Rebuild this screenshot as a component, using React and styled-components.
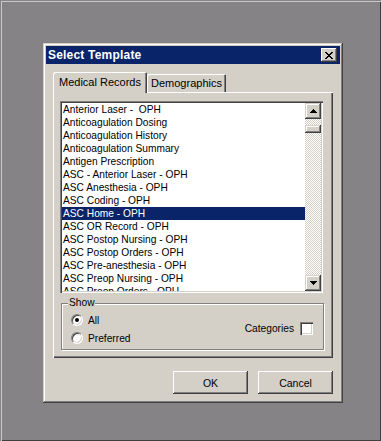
import React, { useState } from "react";
import styled, { createGlobalStyle } from "styled-components";

const GlobalStyle = createGlobalStyle`
  html, body {
    margin: 0;
    padding: 0;
  }
  body {
    font-family: "Liberation Sans", Arial, sans-serif;
    font-size: 11px;
    color: #000;
  }
`;

const templates = [
  "Anterior Laser -  OPH",
  "Anticoagulation Dosing",
  "Anticoagulation History",
  "Anticoagulation Summary",
  "Antigen Prescription",
  "ASC - Anterior Laser - OPH",
  "ASC Anesthesia - OPH",
  "ASC Coding - OPH",
  "ASC Home - OPH",
  "ASC OR Record - OPH",
  "ASC Postop Nursing - OPH",
  "ASC Postop Orders - OPH",
  "ASC Pre-anesthesia - OPH",
  "ASC Preop Nursing - OPH",
  "ASC Preop Orders - OPH",
];

function App() {
  const [selected, setSelected] = useState(8);
  const [show, setShow] = useState("all");
  const [categories, setCategories] = useState(false);

  return (
    <>
      <GlobalStyle />
      <Desktop>
        <Window>
          <TitleBar>
            <Title>Select Template</Title>
            <CloseButton aria-label="Close">
              <svg width="8" height="7" viewBox="0 0 8 7">
                <path
                  d="M0 0h2v1h1v1h2V1h1V0h2v1H7v1H6v1H5v1h1v1h1v1h1v1H6V6H5V5H3v1H2v1H0V6h1V5h1V4h1V3H2V2H1V1H0z"
                  fill="#000"
                />
              </svg>
            </CloseButton>
          </TitleBar>

          <Body>
            <TabStrip>
              <Tab active>Medical Records</Tab>
              <Tab>Demographics</Tab>
            </TabStrip>

            <TabPanel>
              <ListBox>
                <Items>
                  {templates.map((t, i) => (
                    <Item
                      key={t}
                      selected={i === selected}
                      onClick={() => setSelected(i)}
                    >
                      {t}
                    </Item>
                  ))}
                </Items>
                <ScrollBar>
                  <ArrowButton>
                    <svg width="7" height="4" viewBox="0 0 7 4">
                      <path d="M3 0h1v1h1v1h1v1h1v1H0V3h1V2h1V1h1z" fill="#000" />
                    </svg>
                  </ArrowButton>
                  <Track>
                    <Thumb />
                  </Track>
                  <ArrowButton>
                    <svg width="7" height="4" viewBox="0 0 7 4">
                      <path d="M0 0h7v1H6v1H5v1H4v1H3V3H2V2H1V1H0z" fill="#000" />
                    </svg>
                  </ArrowButton>
                </ScrollBar>
              </ListBox>

              <GroupBox>
                <Legend>Show</Legend>
                <Options>
                  <RadioRow onClick={() => setShow("all")}>
                    <Radio checked={show === "all"} />
                    All
                  </RadioRow>
                  <RadioRow onClick={() => setShow("preferred")}>
                    <Radio checked={show === "preferred"} />
                    Preferred
                  </RadioRow>
                </Options>
                <CheckRow onClick={() => setCategories(!categories)}>
                  Categories
                  <CheckBox>{categories ? "✓" : ""}</CheckBox>
                </CheckRow>
              </GroupBox>
            </TabPanel>

            <ButtonRow>
              <Button>OK</Button>
              <Button>Cancel</Button>
            </ButtonRow>
          </Body>
        </Window>
      </Desktop>
    </>
  );
}

export default App;

const Desktop = styled.div`
  box-sizing: border-box;
  width: 381px;
  height: 441px;
  padding: 43px 0 0 43px;
  background: #858385;
  box-shadow: inset 1px 1px #858385, inset 2px 2px #c8c6c8,
    inset -1px -1px #404040;
`;

const Window = styled.div`
  box-sizing: border-box;
  width: 300px;
  height: 360px;
  padding: 3px;
  background: #d4d0c8;
  box-shadow: inset -1px -1px #404040, inset 1px 1px #d4d0c8,
    inset -2px -2px #808080, inset 2px 2px #ffffff;
`;

const TitleBar = styled.div`
  display: flex;
  align-items: center;
  justify-content: space-between;
  height: 18px;
  padding: 0 3px 0 2px;
  background: #0a246a;
`;

const Title = styled.span`
  color: #fff;
  font-weight: bold;
  font-size: 12px;
  letter-spacing: 0.2px;
`;

const CloseButton = styled.button`
  display: flex;
  align-items: center;
  justify-content: center;
  width: 16px;
  height: 14px;
  padding: 0;
  border: 0;
  background: #d4d0c8;
  box-shadow: inset -1px -1px #404040, inset 1px 1px #ffffff,
    inset -2px -2px #808080;
`;

const Body = styled.div`
  padding: 8px 7px 0 7px;
`;

const TabStrip = styled.div`
  display: flex;
  align-items: flex-end;
  height: 20px;
  position: relative;
  z-index: 1;
`;

const Tab = styled.div`
  box-sizing: border-box;
  display: flex;
  align-items: center;
  justify-content: center;
  height: ${(p) => (p.active ? "21px" : "18px")};
  margin-bottom: ${(p) => (p.active ? "-1px" : "0")};
  width: ${(p) => (p.active ? "94px" : "79px")};
  padding-bottom: ${(p) => (p.active ? "2px" : "0")};
  background: #d4d0c8;
  border-radius: 2px 2px 0 0;
  font-size: 11px;
  box-shadow: inset 1px 1px #ffffff, inset -1px 0 #404040,
    inset -2px 0 #808080;
`;

const TabPanel = styled.div`
  box-sizing: border-box;
  width: 280px;
  height: 266px;
  padding: 9px 10px 0 7px;
  background: #d4d0c8;
  box-shadow: inset 1px 1px #ffffff, inset -1px -1px #404040,
    inset -2px -2px #808080;
`;

const ListBox = styled.div`
  box-sizing: border-box;
  display: flex;
  width: 263px;
  height: 192px;
  padding: 2px;
  background: #fff;
  box-shadow: inset 1px 1px #808080, inset 2px 2px #404040,
    inset -1px -1px #ffffff, inset -2px -2px #d4d0c8;
`;

const Items = styled.div`
  flex: 1;
  overflow: hidden;
`;

const Item = styled.div`
  height: 13px;
  line-height: 13px;
  padding-left: 1px;
  font-size: 10.2px;
  white-space: pre;
  cursor: default;
  color: ${(p) => (p.selected ? "#fff" : "#000")};
  background: ${(p) => (p.selected ? "#0a246a" : "transparent")};
`;

const ScrollBar = styled.div`
  display: flex;
  flex-direction: column;
  width: 16px;
`;

const ArrowButton = styled.div`
  display: flex;
  align-items: center;
  justify-content: center;
  flex: 0 0 16px;
  height: 16px;
  background: #d4d0c8;
  box-shadow: inset -1px -1px #404040, inset 1px 1px #d4d0c8,
    inset -2px -2px #808080, inset 2px 2px #ffffff;
`;

const Track = styled.div`
  flex: 1;
  padding-top: 6px;
  background: repeating-conic-gradient(#ffffff 0 25%, #d4d0c8 0 50%) 0 0 / 2px
    2px;
`;

const Thumb = styled.div`
  height: 8px;
  background: #d4d0c8;
  box-shadow: inset -1px -1px #404040, inset 1px 1px #d4d0c8,
    inset -2px -2px #808080, inset 2px 2px #ffffff;
`;

const GroupBox = styled.div`
  position: relative;
  box-sizing: border-box;
  display: flex;
  align-items: center;
  justify-content: space-between;
  width: 263px;
  height: 47px;
  margin: 10px 0 0 1px;
  padding: 5px 10px 0 9px;
  border: 1px solid #808080;
  box-shadow: inset 1px 1px #ffffff, 1px 1px #ffffff;
  font-size: 10.2px;
`;

const Legend = styled.span`
  position: absolute;
  top: -7px;
  left: 6px;
  padding: 0 1px;
  background: #d4d0c8;
  font-size: 10.2px;
  line-height: 12px;
`;

const Options = styled.div`
  display: flex;
  flex-direction: column;
  gap: 6px;
`;

const RadioRow = styled.label`
  display: flex;
  align-items: center;
  gap: 5px;
  height: 12px;
`;

const Radio = styled.span`
  box-sizing: border-box;
  display: flex;
  align-items: center;
  justify-content: center;
  width: 12px;
  height: 12px;
  border-radius: 50%;
  background: #fff;
  border: 1px solid;
  border-color: #808080 #ffffff #ffffff #808080;
  box-shadow: inset 1px 1px #404040, inset -1px -1px #d4d0c8;

  &::after {
    content: "";
    width: 4px;
    height: 4px;
    border-radius: 50%;
    background: ${(p) => (p.checked ? "#000" : "transparent")};
  }
`;

const CheckRow = styled.label`
  display: flex;
  align-items: center;
  gap: 6px;
  margin-top: -2px;
`;

const CheckBox = styled.span`
  box-sizing: border-box;
  display: flex;
  align-items: center;
  justify-content: center;
  width: 13px;
  height: 13px;
  background: #fff;
  font-size: 10px;
  box-shadow: inset 1px 1px #808080, inset 2px 2px #404040,
    inset -1px -1px #ffffff, inset -2px -2px #d4d0c8;
`;

const ButtonRow = styled.div`
  display: flex;
  justify-content: flex-end;
  gap: 10px;
  padding: 13px 0 0 0;
`;

const Button = styled.button`
  width: 75px;
  height: 23px;
  padding: 0;
  border: 0;
  background: #d4d0c8;
  font-family: "Liberation Sans", Arial, sans-serif;
  font-size: 10.5px;
  color: #000;
  box-shadow: inset -1px -1px #404040, inset 1px 1px #ffffff,
    inset -2px -2px #808080;
`;
